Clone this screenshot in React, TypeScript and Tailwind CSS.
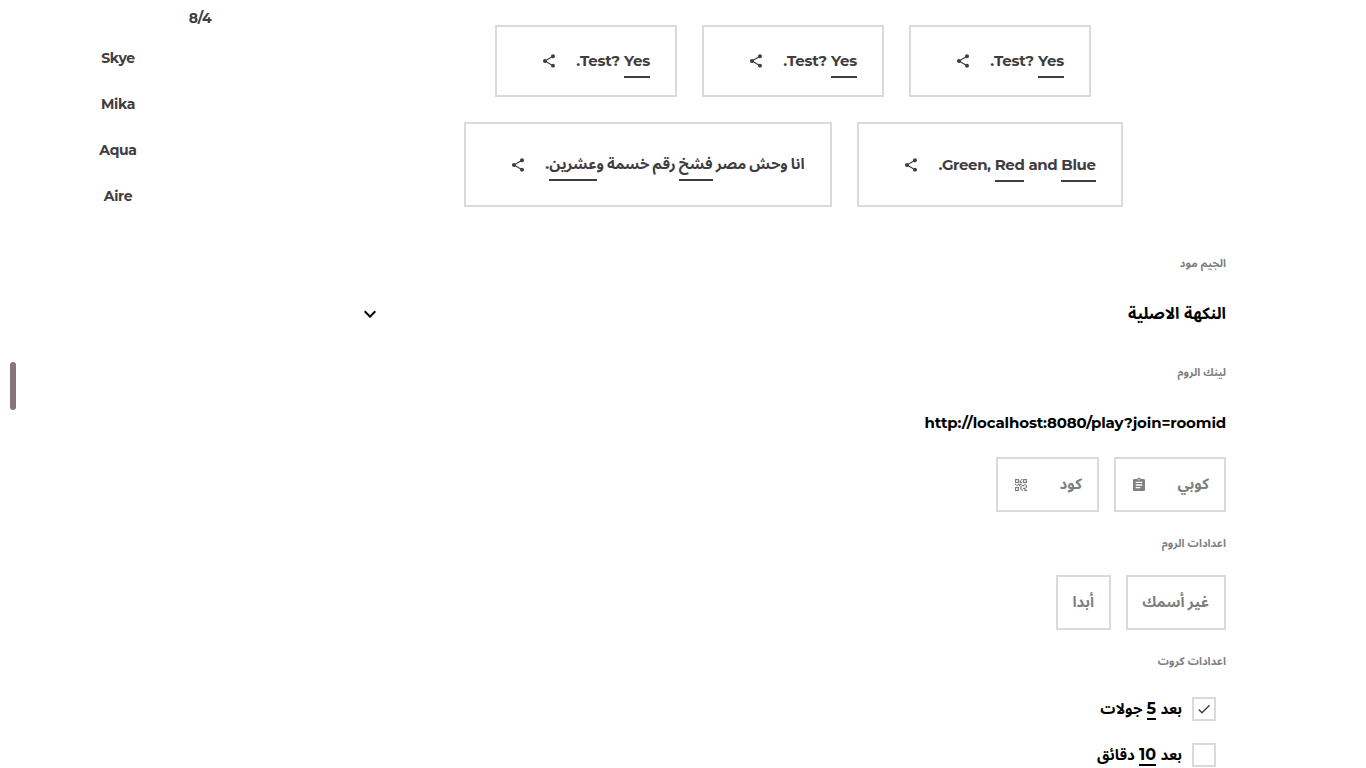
import type { ReactNode } from "react";
import { MdAssignment, MdCheck, MdKeyboardArrowDown, MdQrCode2, MdShare } from "react-icons/md";

const players = ["Skye", "Mika", "Aqua", "Aire"];

function Blank({ children }: { children: ReactNode }) {
  return <span className="border-b-2 border-current pb-[6px]">{children}</span>;
}

function Card({ className, children }: { className: string; children: ReactNode }) {
  return (
    <div className={`flex items-center justify-between border-2 border-[#dadada] pr-[25px] pl-[44px] ${className}`}>
      <p className="whitespace-nowrap">{children}</p>
      <MdShare size={16} className="shrink-0" />
    </div>
  );
}

function Label({ className, children }: { className: string; children: ReactNode }) {
  return <div className={`flex h-5 items-center text-[11px] text-[#7f7f7f] ${className}`}>{children}</div>;
}

function Button({ className, children }: { className: string; children: ReactNode }) {
  return (
    <button
      className={`flex h-[55px] items-center justify-between whitespace-nowrap border-2 border-[#dadada] px-[15px] text-[15px] text-[#7f7f7f] [word-spacing:-1px] ${className}`}
    >
      {children}
    </button>
  );
}

function Option({ checked, children }: { checked?: boolean; children: ReactNode }) {
  return (
    <div className="flex h-6 items-center gap-[10px] text-[15px]">
      <span className="flex size-6 items-center justify-center border-2 border-[#dadada] text-[#3f3d3f]">
        {checked && <MdCheck size={16} />}
      </span>
      <span className="whitespace-nowrap pb-px">{children}</span>
    </div>
  );
}

export default function App() {
  return (
    <div
      dir="rtl"
      className="flex h-[768px] w-[1366px] overflow-hidden bg-white pr-[140px] font-[Montserrat,Inter,'Noto_Sans_Arabic','Noto_Sans',sans-serif] font-bold text-black"
    >
      <main className="flex w-[866px] shrink-0 flex-col pt-[25px]">
        <section className="flex flex-col items-center gap-[25px] text-[15px] text-[#3f3d3f]">
          <div className="flex gap-[25px] tracking-[-0.22px]">
            {[0, 1, 2].map((i) => (
              <Card key={i} className="h-[72px] w-[182px]">
                Test? <Blank>Yes</Blank>.
              </Card>
            ))}
          </div>
          <div className="flex gap-[25px]">
            <Card className="h-[85px] w-[266px] tracking-[-0.4px] [word-spacing:0.2px]">
              <span className="block pt-[2px]">
                Green, <Blank>Red</Blank> and <Blank>Blue</Blank>.
              </span>
            </Card>
            <Card className="h-[85px] w-[368px] [word-spacing:-1.2px]">
              انا وحش مصر <Blank>فشخ</Blank> رقم خسمة و<Blank>عشرين</Blank>.
            </Card>
          </div>
        </section>

        <Label className="mt-[46px]">الجيم مود</Label>
        <div className="mt-[26px] flex h-[30px] items-center justify-between text-[16.2px]">
          <span className="pb-0.5">النكهة الاصلية</span>
          <MdKeyboardArrowDown size={24} className="ml-[-2px]" />
        </div>
        <Label className="mt-[33px]">لينك الروم</Label>
        <div
          dir="ltr"
          className="mt-[31px] flex h-[20px] items-center justify-end text-[15px] tracking-[-0.14px]"
        >
          http://localhost:8080/play?join=roomid
        </div>
        <div className="mt-[24px] flex gap-[15px]">
          <Button className="w-[112px]">
            كوبي
            <MdAssignment size={16} />
          </Button>
          <Button className="w-[103px]">
            كود
            <MdQrCode2 size={16} />
          </Button>
        </div>
        <Label className="mt-[21px]">اعدادات الروم</Label>
        <div className="mt-[22px] flex gap-[15px]">
          <Button className="w-[100px]">غير أسمك</Button>
          <Button className="w-[55px]">أبدا</Button>
        </div>
        <Label className="mt-[21px]">اعدادات كروت</Label>
        <div className="mt-[26px] flex flex-col gap-[22px] pr-[10px]">
          <Option checked>
            بعد <span className="border-b-2 border-black text-base">5</span> جولات
          </Option>
          <Option>
            بعد <span className="border-b-2 border-black text-base">10</span> دقائق
          </Option>
        </div>
      </main>

      <aside dir="ltr" className="flex grow text-[14px] tracking-[-0.3px] text-[#3f3d3f]">
        <div className="flex w-[100px] items-start pt-[362px] pl-[10px]">
          <div className="h-12 w-[6px] rounded-[3px] bg-[#857779]" />
        </div>
        <div className="-ml-[22px] flex w-[80px] flex-col gap-[26px] pt-12 text-center">
          {players.map((name) => (
            <div key={name} className="h-5 leading-5">
              {name}
            </div>
          ))}
        </div>
        <div className="w-[84px] pt-2 text-center leading-5">8/4</div>
      </aside>
    </div>
  );
}
